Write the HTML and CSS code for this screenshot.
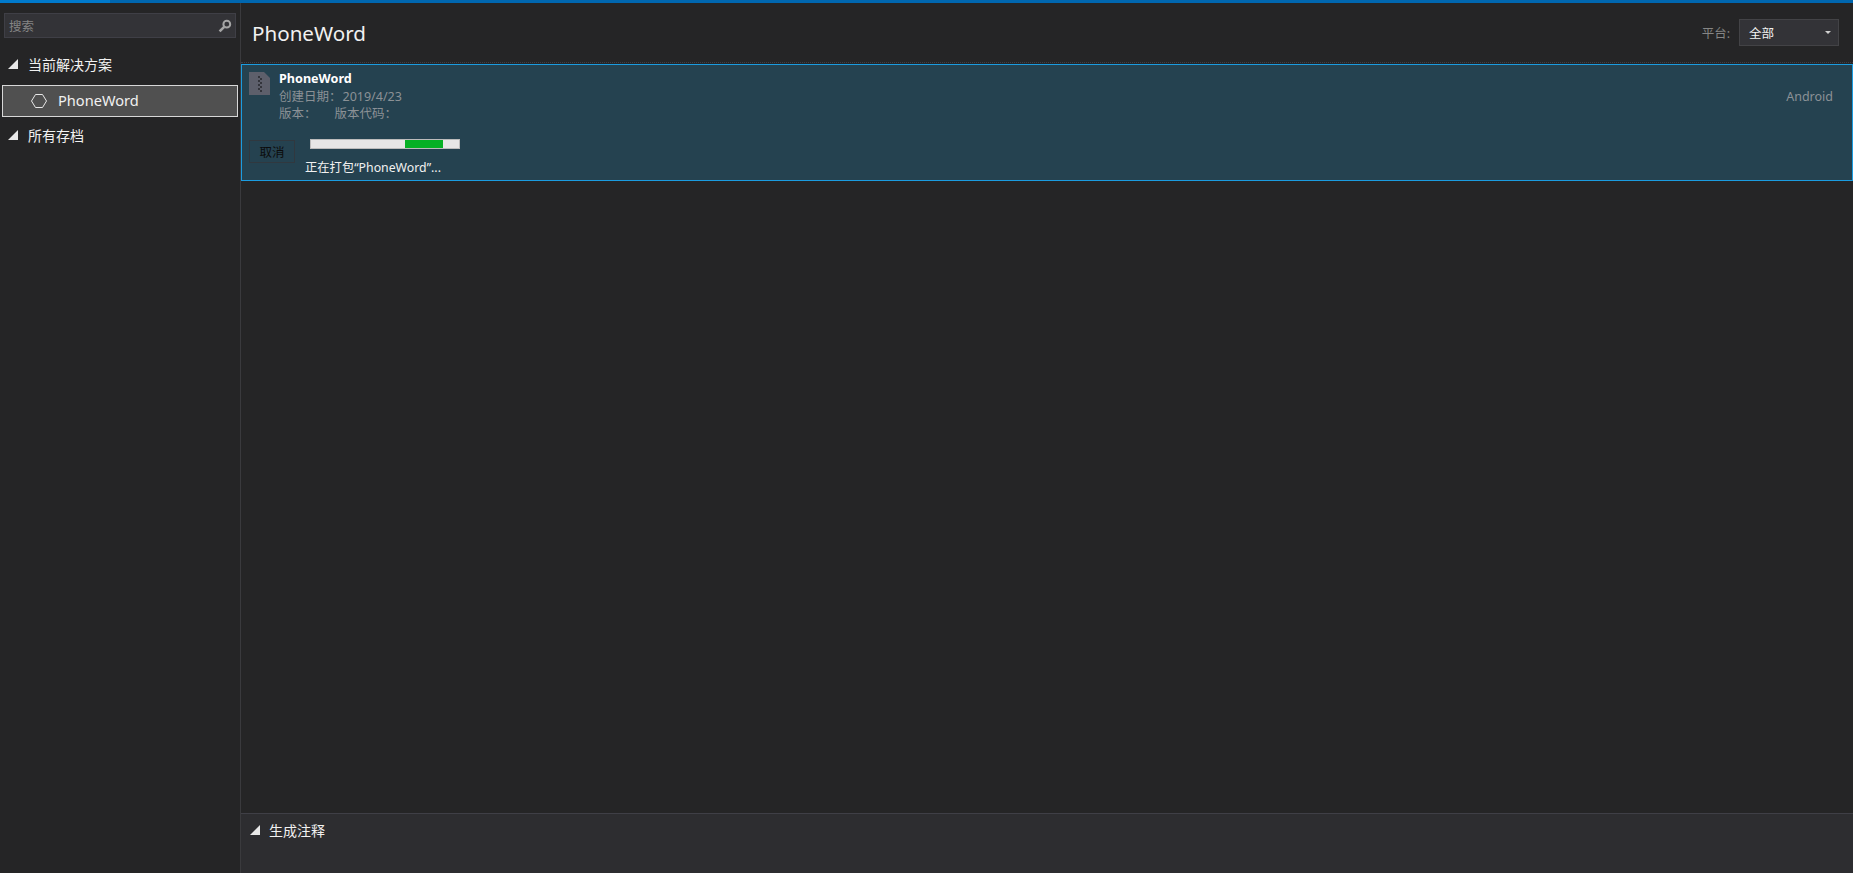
FILE: index.html
```html
<!DOCTYPE html>
<html lang="zh-CN">

<head>
  <meta charset="UTF-8">
  <meta name="viewport" content="width=device-width, initial-scale=1.0">
  <title>存档管理器</title>
  <link rel="stylesheet" href="styles.css">
</head>

<body>
  <div class="top-line">
    <div class="top-line-progress"></div>
  </div>
  <div class="layout">
    <aside class="sidebar">
      <div class="search">
        <span class="search-text">搜索</span>
        <svg class="search-icon" width="14" height="14" viewBox="0 0 14 14">
          <circle cx="8.8" cy="5.2" r="3.4" fill="none" stroke="#a5a5a5" stroke-width="2"/>
          <path d="M6.2 7.8 1.6 12.4" stroke="#a5a5a5" stroke-width="2.6"/>
        </svg>
      </div>
      <div class="tree-head tree-head-first"><span class="arrow"></span>当前解决方案</div>
      <div class="tree-item">
        <svg class="hex" width="16" height="16" viewBox="0 0 16 16">
          <path d="M4.5 1.5h7L15.5 8l-4 6.5h-7L.5 8z" fill="none" stroke="#e8e8e8" stroke-width="1"/>
        </svg>
        <span class="tree-item-name">PhoneWord</span>
      </div>
      <div class="tree-head"><span class="arrow"></span>所有存档</div>
    </aside>

    <main class="content">
      <header class="title-bar">
        <h1>PhoneWord</h1>
        <div class="platform">
          <span class="platform-label">平台:</span>
          <div class="select">
            <span>全部</span>
            <span class="select-caret"></span>
          </div>
        </div>
      </header>

      <section class="archive-list">
        <article class="archive">
          <div class="archive-top">
            <svg class="zip-icon" width="21" height="23" viewBox="0 0 21 23">
              <path d="M0 0h15l6 6v17H0z" fill="#5d5f6b"/>
              <path d="M9 4h2v2H9zM11 6h2v2h-2zM9 8h2v2H9zM11 10h2v2h-2zM9 12h2v2H9zM11 14h2v2h-2zM9 16h2v2H9zM11 18h2v2h-2z" fill="#33343b"/>
            </svg>
            <div class="archive-info">
              <div class="archive-name">PhoneWord</div>
              <div class="archive-meta">创建日期：<span class="archive-date">2019/4/23</span></div>
              <div class="archive-meta">版本：<span class="version-code">版本代码：</span></div>
            </div>
            <div class="archive-platform">Android</div>
          </div>
          <div class="archive-bottom">
            <button class="cancel">取消</button>
            <div class="progress-wrap">
              <div class="progress">
                <div class="progress-gap"></div>
                <div class="progress-bar"></div>
              </div>
              <div class="progress-text">正在打包“PhoneWord”...</div>
            </div>
          </div>
        </article>
      </section>

      <footer class="notes">
        <span class="arrow"></span>生成注释
      </footer>
    </main>
  </div>
</body>

</html>
```

FILE: styles.css
```css
html {
  box-sizing: border-box;
  font-family: "Noto Sans", "Noto Sans CJK SC", sans-serif;
  font-size: 14px;
}

*,
*::before,
*::after {
  box-sizing: border-box;
}

body {
  margin: 0;
  height: 100vh;
  overflow: hidden;
  display: flex;
  flex-direction: column;
  background-color: #252526;
  color: #f1f1f1;
}

.top-line {
  height: 3px;
  flex: none;
  background-color: #0067b0;
}

.top-line-progress {
  width: 110px;
  height: 100%;
  background-color: #007acc;
}

.layout {
  flex: 1;
  display: flex;
  min-height: 0;
}

.sidebar {
  width: 241px;
  flex: none;
  padding: 10px 2px 0 2px;
  border-right: 1px solid #3a3a3d;
}

.search {
  display: flex;
  align-items: center;
  justify-content: space-between;
  height: 25px;
  margin: 0 2px;
  padding: 0 3px 0 4px;
  background-color: #333337;
  border: 1px solid #3f3f46;
}

.search-text {
  font-size: 12.5px;
  color: #858585;
}

.tree-head {
  display: flex;
  align-items: center;
  height: 36px;
  padding-left: 6px;
  font-size: 14px;
}

.tree-head-first {
  margin-top: 8px;
  margin-bottom: 3px;
}

.arrow {
  display: inline-block;
  width: 0;
  height: 0;
  margin-right: 10px;
  border-style: solid;
  border-width: 0 0 10px 10px;
  border-color: transparent transparent #e8e8e8 transparent;
}

.tree-item {
  display: flex;
  align-items: center;
  height: 32px;
  padding-left: 28px;
  background-color: #505050;
  border: 1px solid #d8d8d8;
  font-size: 14.6px;
}

.tree-item .hex {
  margin-right: 11px;
}

.tree-item-name {
  margin-top: -2px;
}

.content {
  flex: 1;
  min-width: 0;
  display: flex;
  flex-direction: column;
}

.title-bar {
  height: 60px;
  flex: none;
  display: flex;
  align-items: center;
  justify-content: space-between;
  padding: 0 14px 0 11px;
  border-bottom: 1px dotted #3f3f46;
}

.title-bar h1 {
  margin: 0;
  font-size: 20.6px;
  font-weight: 400;
}

.platform {
  display: flex;
  align-items: center;
  gap: 9px;
}

.platform-label {
  font-size: 12.5px;
  color: #858585;
}

.select {
  display: flex;
  align-items: center;
  justify-content: space-between;
  width: 100px;
  height: 27px;
  padding: 0 7px 0 9px;
  background-color: #333337;
  border: 1px solid #434346;
  font-size: 12.5px;
}

.select-caret {
  width: 0;
  height: 0;
  border-style: solid;
  border-width: 3px 3px 0 3px;
  border-color: #d0d0d0 transparent transparent transparent;
}

.archive-list {
  flex: 1;
  padding-top: 1px;
}

.archive {
  height: 117px;
  padding: 7px 8px 0 7px;
  background-color: #254250;
  border: 1px solid #1b9ce0;
}

.archive-top {
  display: flex;
  height: 62px;
}

.zip-icon {
  flex: none;
  margin-right: 9px;
}

.archive-info {
  flex: 1;
  margin-top: -2px;
  line-height: 17.5px;
  font-size: 12.5px;
}

.archive-name {
  font-size: 12.6px;
  font-weight: 700;
  color: #fff;
}

.archive-meta {
  color: #8b9196;
}

.archive-date {
  margin-left: 1px;
}

.version-code {
  margin-left: 18px;
}

.archive-platform {
  margin-top: 16px;
  margin-right: 11px;
  font-size: 12.5px;
  line-height: 17px;
  color: #8b9196;
}

.archive-bottom {
  display: flex;
}

.cancel {
  width: 46px;
  height: 23px;
  margin-top: 6px;
  padding: 0;
  background-color: #254250;
  border: 1px solid #30383f;
  color: #0c0c0c;
  font-family: inherit;
  font-size: 12.5px;
}

.progress-wrap {
  margin-left: 10px;
}

.progress {
  display: flex;
  width: 150px;
  height: 10px;
  margin-left: 5px;
  margin-top: 5px;
  background-color: #e6e6e6;
  border: 1px solid #bcbcbc;
}

.progress-gap {
  width: 94px;
}

.progress-bar {
  width: 38px;
  background-color: #06b025;
}

.progress-text {
  margin-top: 10px;
  font-size: 12.3px;
  line-height: 17px;
  color: #f1f1f1;
}

.notes {
  height: 60px;
  flex: none;
  display: flex;
  align-items: flex-start;
  padding: 8px 0 0 9px;
  line-height: 18px;
  background-color: #2d2d30;
  border-top: 1px solid #3f3f46;
  font-size: 14px;
}

.notes .arrow {
  margin-top: 3px;
  margin-right: 9px;
}
```
